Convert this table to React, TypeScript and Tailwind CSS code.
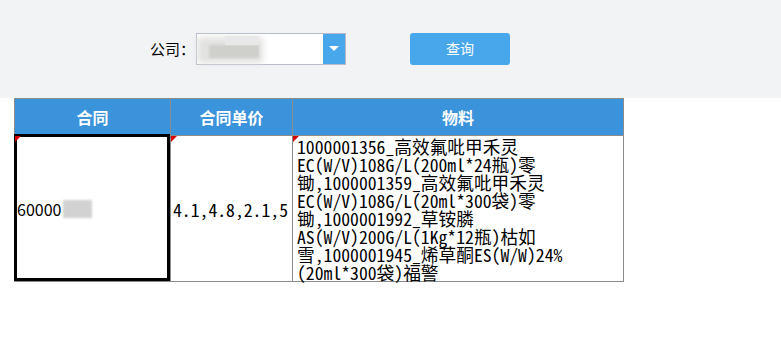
import React from "react";

const lines = [
  "1000001356_高效氟吡甲禾灵",
  "EC(W/V)108G/L(200ml*24瓶)零",
  "锄,1000001359_高效氟吡甲禾灵",
  "EC(W/V)108G/L(20ml*300袋)零",
  "锄,1000001992_草铵膦",
  "AS(W/V)200G/L(1Kg*12瓶)枯如",
  "雪,1000001945_烯草酮ES(W/W)24%",
  "(20ml*300袋)福警",
];

function Corner() {
  return (
    <span className="absolute left-0 top-0 h-0 w-0 border-l-[6px] border-b-[6px] border-l-[#d40000] border-b-transparent" />
  );
}

export default function App() {
  const sans = { fontFamily: '"Noto Sans CJK SC", "Noto Sans", sans-serif' };
  const mono = {
    fontFamily: '"Noto Sans Mono CJK SC", "Noto Sans CJK SC", monospace',
  };
  return (
    <div className="min-h-[354px] w-[781px] bg-white" style={sans}>
      <div className="flex h-[98px] items-center bg-[#f2f3f5] pb-[1px] pl-[150px]">
        <span className="w-[46px] text-[15px] leading-none text-black">公司：</span>
        <div className="flex h-[32px] w-[150px] border border-[#b7bbc9] bg-white">
          <div className="relative flex-1">
            <div className="absolute left-[0px] top-[3px] h-[26px] w-[66px] bg-[#e2e2e0] blur-[3px]" />
            <div className="absolute left-[12px] top-[11px] h-[13px] w-[50px] bg-[#cfcfcb] blur-[1px]" />
            <div className="absolute left-[28px] top-[2px] h-[9px] w-[34px] bg-[#e8e8e8]" />
          </div>
          <div className="flex w-[22px] items-center justify-center bg-[#48a7eb]">
            <span className="h-0 w-0 border-x-[5px] border-t-[5px] border-x-transparent border-t-white" />
          </div>
        </div>
        <button className="ml-[64px] flex h-[32px] w-[100px] items-center justify-center rounded-[3px] bg-[#48a7eb] text-[14px] text-white">
          查询
        </button>
      </div>
      <div className="pl-[14px]">
        <div className="flex w-[610px] flex-col">
          <div className="flex h-[38px] border border-[#8c8c8c] bg-[#3a93db] text-[16px] font-bold text-white">
            <div className="flex w-[156px] items-center justify-center border-r border-[#8c8c8c]">合同</div>
            <div className="flex w-[122px] items-center justify-center border-r border-[#8c8c8c]">合同单价</div>
            <div className="flex flex-1 items-center justify-center">物料</div>
          </div>
          <div className="flex h-[146px] border-x border-b border-[#8c8c8c] text-black">
            <div className="relative flex w-[156px] items-center border-r border-[#8c8c8c] pl-[2px]">
              <div className="pointer-events-none absolute -left-[1px] -top-[2px] bottom-0 right-0 border-[3px] border-black" />
              <Corner />
              <span className="text-[16px] leading-none">60000</span>
              <span className="ml-[2px] h-[18px] w-[29px] bg-[#d2d2d2] blur-[1px]" />
            </div>
            <div className="relative flex w-[122px] items-center border-r border-[#8c8c8c] pl-[2px]" style={mono}>
              <Corner />
              <span className="whitespace-nowrap text-[17.7px] leading-[18px]">4.1,4.8,2.1,5</span>
            </div>
            <div className="relative flex-1 pl-[4px] pt-[1px]" style={mono}>
              <Corner />
              {lines.map((l, i) => (
                <div key={i} className="whitespace-nowrap text-[17.7px] leading-[18px]">
                  {l}
                </div>
              ))}
            </div>
          </div>
        </div>
      </div>
    </div>
  );
}
